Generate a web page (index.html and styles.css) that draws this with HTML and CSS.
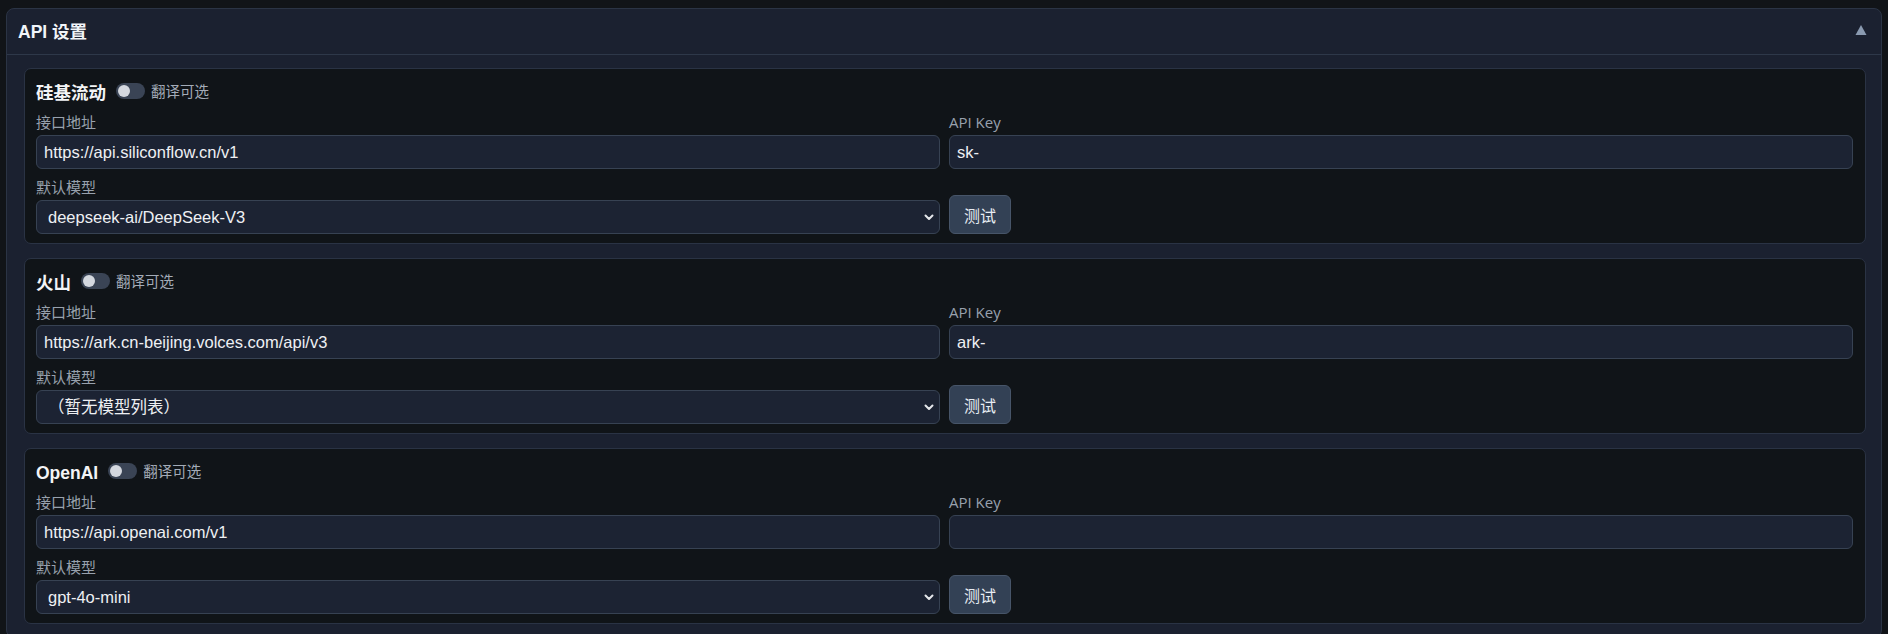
FILE: index.html
```html
<!DOCTYPE html>
<html lang="zh-CN">
<head>
<meta charset="utf-8">
<title>API 设置</title>
<link rel="stylesheet" href="styles.css">
</head>
<body>
<section class="panel">
  <header class="panel-header">
    <h2 class="panel-title">API 设置</h2>
    <svg class="collapse-icon" width="12" height="12" viewBox="0 0 12 12"><path d="M6 1 L11.5 11 L0.5 11 Z" fill="#8a9ab0"/></svg>
  </header>
  <div class="panel-body">
    <div class="card">
      <div class="card-head">
        <span class="card-title">硅基流动</span>
        <span class="toggle"><span class="knob"></span></span>
        <span class="toggle-label">翻译可选</span>
      </div>
      <div class="grid">
        <div class="field">
          <label class="label">接口地址</label>
          <input class="input" type="text" value="https://api.siliconflow.cn/v1">
        </div>
        <div class="field">
          <label class="label">API Key</label>
          <input class="input" type="text" value="sk-">
        </div>
        <div class="field">
          <label class="label">默认模型</label>
          <div class="select-wrap">
            <select class="select"><option>deepseek-ai/DeepSeek-V3</option></select>
            <svg class="chevron" width="10" height="7" viewBox="0 0 10 7"><path d="M1.5 1.5 L5 5 L8.5 1.5" fill="none" stroke="#e5e7eb" stroke-width="2" stroke-linecap="round" stroke-linejoin="round"/></svg>
          </div>
        </div>
        <div class="action">
          <button class="btn">测试</button>
        </div>
      </div>
    </div>

    <div class="card">
      <div class="card-head">
        <span class="card-title">火山</span>
        <span class="toggle"><span class="knob"></span></span>
        <span class="toggle-label">翻译可选</span>
      </div>
      <div class="grid">
        <div class="field">
          <label class="label">接口地址</label>
          <input class="input" type="text" value="https://ark.cn-beijing.volces.com/api/v3">
        </div>
        <div class="field">
          <label class="label">API Key</label>
          <input class="input" type="text" value="ark-">
        </div>
        <div class="field">
          <label class="label">默认模型</label>
          <div class="select-wrap">
            <select class="select"><option>（暂无模型列表）</option></select>
            <svg class="chevron" width="10" height="7" viewBox="0 0 10 7"><path d="M1.5 1.5 L5 5 L8.5 1.5" fill="none" stroke="#e5e7eb" stroke-width="2" stroke-linecap="round" stroke-linejoin="round"/></svg>
          </div>
        </div>
        <div class="action">
          <button class="btn">测试</button>
        </div>
      </div>
    </div>

    <div class="card">
      <div class="card-head">
        <span class="card-title">OpenAI</span>
        <span class="toggle"><span class="knob"></span></span>
        <span class="toggle-label">翻译可选</span>
      </div>
      <div class="grid">
        <div class="field">
          <label class="label">接口地址</label>
          <input class="input" type="text" value="https://api.openai.com/v1">
        </div>
        <div class="field">
          <label class="label">API Key</label>
          <input class="input" type="text" value="">
        </div>
        <div class="field">
          <label class="label">默认模型</label>
          <div class="select-wrap">
            <select class="select"><option>gpt-4o-mini</option></select>
            <svg class="chevron" width="10" height="7" viewBox="0 0 10 7"><path d="M1.5 1.5 L5 5 L8.5 1.5" fill="none" stroke="#e5e7eb" stroke-width="2" stroke-linecap="round" stroke-linejoin="round"/></svg>
          </div>
        </div>
        <div class="action">
          <button class="btn">测试</button>
        </div>
      </div>
    </div>
  </div>
</section>
</body>
</html>
```
FILE: styles.css
```css
html, body {
  margin: 0;
  padding: 0;
}
body {
  background: #111418;
  padding: 8px 6px 0 6px;
  font-family: "Liberation Sans", "Noto Sans CJK SC", sans-serif;
  color: #e5e7eb;
  overflow: hidden;
}
.panel {
  background: #1b2130;
  border: 1px solid #2b3445;
  border-radius: 8px;
}
.panel-header {
  height: 45px;
  border-bottom: 1px solid #2e3849;
  display: flex;
  align-items: center;
  justify-content: space-between;
  padding: 0 14px 0 11px;
}
.panel-title {
  margin: 0;
  font-size: 17.5px;
  font-weight: 700;
  color: #f1f5f9;
  line-height: 22px;
}
.collapse-icon {
  display: block;
  margin-top: -4px;
}
.panel-body {
  padding: 13px 15px 13px 17px;
  display: flex;
  flex-direction: column;
  gap: 14px;
}
.card {
  background: #101418;
  border: 1px solid #2a3344;
  border-radius: 7px;
  padding: 11px 12px 9px 11px;
}
.card-head {
  height: 22px;
  display: flex;
  align-items: center;
  margin-bottom: 10px;
}
.card-title {
  font-size: 17.5px;
  font-weight: 700;
  color: #f3f4f6;
  line-height: 22px;
  margin-top: 4px;
  margin-right: 10px;
}
.toggle {
  width: 29px;
  height: 16px;
  border-radius: 8px;
  background: #3a4455;
  display: flex;
  align-items: center;
  padding: 0 2px;
  box-sizing: border-box;
  margin-right: 6px;
}
.knob {
  width: 12px;
  height: 12px;
  border-radius: 50%;
  background: #d4d8df;
}
.toggle-label {
  font-family: "Noto Sans CJK SC", sans-serif;
  font-size: 14.5px;
  color: #a3abb7;
  line-height: 20px;
}
.grid {
  display: grid;
  grid-template-columns: 1fr 1fr;
  column-gap: 9px;
  row-gap: 8px;
}
.field {
  display: flex;
  flex-direction: column;
  min-width: 0;
}
.label {
  font-family: "Open Sans", "Noto Sans CJK SC", sans-serif;
  font-size: 15px;
  line-height: 20px;
  height: 20px;
  color: #98a1ad;
  margin-bottom: 3px;
}
.input,
.select {
  box-sizing: border-box;
  width: 100%;
  height: 34px;
  background: #1c2333;
  border: 1px solid #374253;
  border-radius: 6px;
  color: #eef0f3;
  font-family: "Liberation Sans", "Noto Sans CJK SC", sans-serif;
  font-size: 16.5px;
  padding: 0 7px;
  outline: none;
  margin: 0;
}
.select-wrap {
  position: relative;
}
.select {
  appearance: none;
  -webkit-appearance: none;
  padding: 0 30px 0 11px;
}
.chevron {
  position: absolute;
  right: 6px;
  top: 14px;
  pointer-events: none;
}
.action {
  display: flex;
  align-items: flex-end;
}
.btn {
  height: 39px;
  width: 62px;
  box-sizing: border-box;
  background: #334155;
  border: 1px solid #475569;
  border-radius: 6px;
  color: #e8edf3;
  font-family: "Noto Sans CJK SC", sans-serif;
  font-size: 16px;
  padding: 0;
  cursor: pointer;
}
```
